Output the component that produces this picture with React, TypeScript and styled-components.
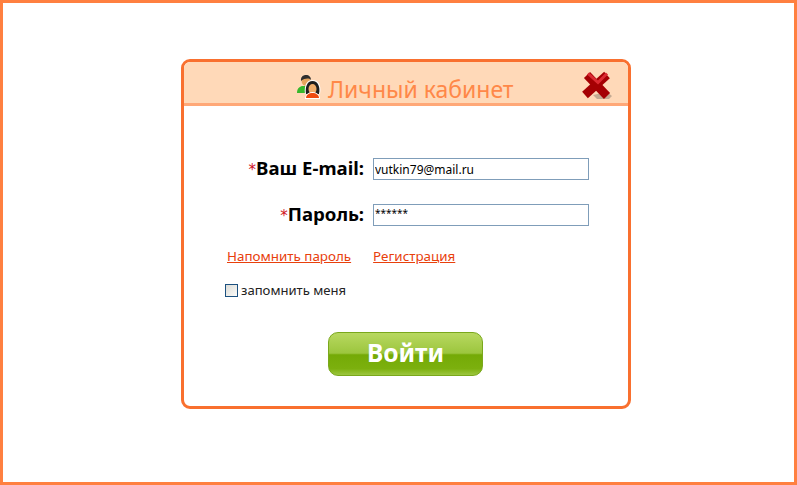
import React from "react";
import styled, { createGlobalStyle } from "styled-components";

const Global = createGlobalStyle`
  html, body {
    margin: 0;
    padding: 0;
    background: #fff;
  }
`;

const Page = styled.div`
  box-sizing: border-box;
  width: 797px;
  height: 485px;
  border: 3px solid #ff8040;
  padding: 56px 0 0 178px;
  background: #fff;
  font-family: "Noto Sans", Tahoma, sans-serif;
`;

const Panel = styled.div`
  box-sizing: border-box;
  width: 450px;
  height: 350px;
  border: 3px solid #f9702f;
  border-radius: 9px;
  overflow: hidden;
  background: #fff;
`;

const Header = styled.div`
  box-sizing: border-box;
  height: 44px;
  display: flex;
  align-items: flex-start;
  padding: 9px 15px 0 113px;
  background: #ffd9b8;
  border-bottom: 3px solid #ffa878;
`;

const IconSlot = styled.span`
  display: block;
  height: 24px;
  margin-top: 4px;
`;

const CloseSlot = styled.span`
  display: block;
  height: 30px;
`;

const Title = styled.h1`
  margin: 0 0 0 7px;
  flex: 1;
  font-size: 23px;
  line-height: 37px;
  font-weight: normal;
  color: #ff8848;
  white-space: nowrap;
`;

const Form = styled.form`
  padding: 52px 0 0 41px;
`;

const Row = styled.div`
  display: flex;
  align-items: center;
  height: 22px;
  margin-bottom: 24px;
`;

const Label = styled.label`
  width: 139px;
  text-align: right;
  font-size: 18.600px;
  line-height: 22px;
  font-weight: bold;
  color: #000;
  white-space: nowrap;
`;

const Star = styled.span`
  font-family: "DejaVu Sans", sans-serif;
  color: #d0101c;
  font-weight: normal;
  font-size: 15px;
`;

const Input = styled.input<{ $masked?: boolean }>`
  box-sizing: border-box;
  width: 216px;
  height: 22px;
  margin-left: 9px;
  padding: ${(p) => (p.$masked ? "0 1px 4px" : "0 1px")};
  border: 1px solid #7f9db9;
  outline: none;
  font-family: "Noto Sans", Tahoma, sans-serif;
  font-size: ${(p) => (p.$masked ? "10px" : "12px")};
  color: #000;
`;

const Links = styled.div`
  display: flex;
  gap: 22px;
  margin: -2px 0 18px 2px;
`;

const TextLink = styled.a`
  font-size: 13.400px;
  line-height: 16px;
  color: #e8400c;
  text-decoration: underline;
  white-space: nowrap;
`;

const Remember = styled.label`
  display: flex;
  align-items: center;
  gap: 3px;
  font-size: 13.100px;
  line-height: 16px;
  color: #222;
`;

const Box = styled.span`
  box-sizing: border-box;
  width: 13px;
  height: 13px;
  border: 1px solid #1c5180;
  background: linear-gradient(135deg, #dcdcd7, #fbfbf9);
`;

const ButtonRow = styled.div`
  display: flex;
  padding: 34px 0 0 103px;
`;

const SubmitButton = styled.button`
  box-sizing: border-box;
  width: 155px;
  height: 44px;
  padding: 0 0 4px;
  border: 1px solid #7aa81c;
  border-radius: 10px;
  background: linear-gradient(
    to bottom,
    #b8d860 0%,
    #9cc63e 48%,
    #74aa06 52%,
    #7cb00e 85%,
    #9cc640 100%
  );
  font-family: "Noto Sans", Tahoma, sans-serif;
  font-size: 24.600px;
  font-weight: bold;
  color: #fff;
`;

function UsersIcon() {
  return (
    <svg width="24" height="24" viewBox="0 0 24 24" style={{ display: "block" }}>
      <path d="M0 18c0-5 3-7 6-7h2c2 0 4 1 4 3v4z" fill="#38b82c" />
      <ellipse cx="9" cy="6" rx="4.400" ry="5" fill="#e6a45c" />
      <path d="M4 6c-.5-4 2-6 5-6s5 2 5 5c-2-2-6-2-10 1z" fill="#2e2e2e" />
      <path d="M8 19c-1-8 1-14 7.500-14s9 6 7.500 14z" fill="#fff" />
      <path d="M9 19c-1-7 1-13 6.500-13s8 6 6.500 13z" fill="#1e1e1e" />
      <ellipse cx="15.500" cy="14" rx="4" ry="5" fill="#f0ae6c" />
      <path d="M8 24c0-4 3-7 7.500-7s7.500 3 7.500 7z" fill="#fff" />
      <path d="M9 23c0-3 3-5 6.500-5s6.500 2 6.500 5z" fill="#ef4a10" />
    </svg>
  );
}

function CloseIcon() {
  return (
    <svg width="32" height="30" viewBox="0 0 32 30" style={{ display: "block" }}>
      <path d="M12 24 26 21 31 25 28 28 16 28z" fill="#8a7b6c" opacity="0.5" />
      <path d="M6 4 26 25" stroke="#a50003" strokeWidth="8.500" />
      <path d="M26 4 4 24" stroke="#a50003" strokeWidth="8.500" />
      <path d="M7 2.500 17 11.500 26 2.500" stroke="#dc2a32" strokeWidth="3" fill="none" />
    </svg>
  );
}

export default function App() {
  return (
    <>
      <Global />
      <Page>
        <Panel>
          <Header>
            <IconSlot>
              <UsersIcon />
            </IconSlot>
            <Title>Личный кабинет</Title>
            <CloseSlot>
              <CloseIcon />
            </CloseSlot>
          </Header>
          <Form>
            <Row>
              <Label>
                <Star>*</Star>Ваш E-mail:
              </Label>
              <Input defaultValue="vutkin79@mail.ru" />
            </Row>
            <Row>
              <Label>
                <Star>*</Star>Пароль:
              </Label>
              <Input $masked defaultValue="******" />
            </Row>
            <Links>
              <TextLink>Напомнить пароль</TextLink>
              <TextLink>Регистрация</TextLink>
            </Links>
            <Remember>
              <Box />
              запомнить меня
            </Remember>
            <ButtonRow>
              <SubmitButton type="button">Войти</SubmitButton>
            </ButtonRow>
          </Form>
        </Panel>
      </Page>
    </>
  );
}
